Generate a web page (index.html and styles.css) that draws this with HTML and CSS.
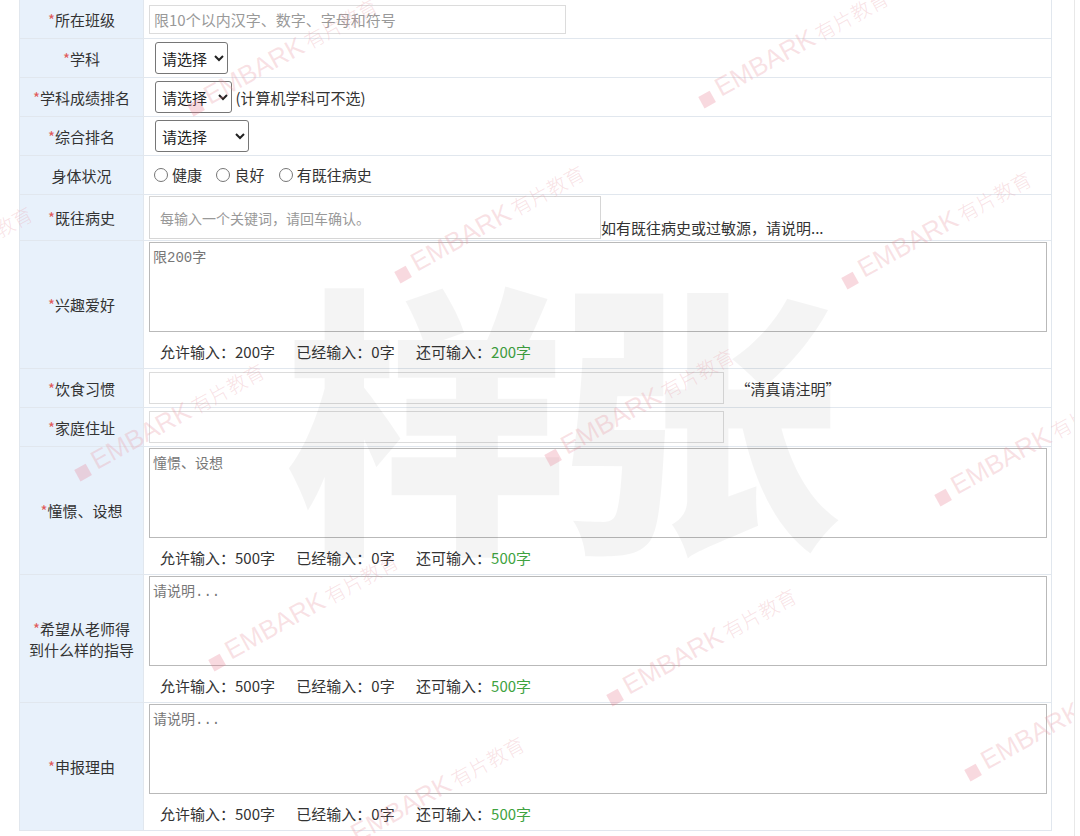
FILE: index.html
```html
<!DOCTYPE html>
<html lang="zh-CN">

<head>
  <meta charset="UTF-8" />
  <title>申报表</title>
  <link rel="stylesheet" href="styles.css">
</head>

<body>
  <div class="page">
    <table class="form-table">
      <tr class="row-s">
        <td class="label"><i>*</i>所在班级</td>
        <td class="field">
          <input type="text" class="txt txt-class" placeholder="限10个以内汉字、数字、字母和符号" />
        </td>
      </tr>
      <tr class="row-s">
        <td class="label"><i>*</i>学科</td>
        <td class="field">
          <select class="sel sel-1"><option>请选择</option></select>
        </td>
      </tr>
      <tr class="row-s">
        <td class="label"><i>*</i>学科成绩排名</td>
        <td class="field">
          <select class="sel sel-2"><option>请选择</option></select>
          <span class="tip">(计算机学科可不选)</span>
        </td>
      </tr>
      <tr class="row-s">
        <td class="label"><i>*</i>综合排名</td>
        <td class="field">
          <select class="sel sel-3"><option>请选择</option></select>
        </td>
      </tr>
      <tr class="row-s">
        <td class="label">身体状况</td>
        <td class="field">
          <label class="radio"><input type="radio" name="health" />健康</label>
          <label class="radio"><input type="radio" name="health" />良好</label>
          <label class="radio"><input type="radio" name="health" />有既往病史</label>
        </td>
      </tr>
      <tr class="row-m">
        <td class="label"><i>*</i>既往病史</td>
        <td class="field field-top">
          <div class="tags">
            <input type="text" class="txt txt-tag" placeholder="每输入一个关键词，请回车确认。" />
            <span class="tip">如有既往病史或过敏源，请说明...</span>
          </div>
        </td>
      </tr>
      <tr class="row-l">
        <td class="label"><i>*</i>兴趣爱好</td>
        <td class="field field-top">
          <textarea class="area" placeholder="限200字"></textarea>
          <div class="count">
            <span>允许输入：200字</span>
            <span>已经输入：0字</span>
            <span>还可输入：<b>200字</b></span>
          </div>
        </td>
      </tr>
      <tr class="row-s">
        <td class="label"><i>*</i>饮食习惯</td>
        <td class="field">
          <input type="text" class="txt txt-wide" />
          <span class="tip tip-quote">“清真请注明”</span>
        </td>
      </tr>
      <tr class="row-s">
        <td class="label"><i>*</i>家庭住址</td>
        <td class="field">
          <input type="text" class="txt txt-wide" />
        </td>
      </tr>
      <tr class="row-l">
        <td class="label"><i>*</i>憧憬、设想</td>
        <td class="field field-top">
          <textarea class="area" placeholder="憧憬、设想"></textarea>
          <div class="count">
            <span>允许输入：500字</span>
            <span>已经输入：0字</span>
            <span>还可输入：<b>500字</b></span>
          </div>
        </td>
      </tr>
      <tr class="row-l">
        <td class="label"><i>*</i>希望从老师得<br>到什么样的指导</td>
        <td class="field field-top">
          <textarea class="area" placeholder="请说明..."></textarea>
          <div class="count">
            <span>允许输入：500字</span>
            <span>已经输入：0字</span>
            <span>还可输入：<b>500字</b></span>
          </div>
        </td>
      </tr>
      <tr class="row-l">
        <td class="label"><i>*</i>申报理由</td>
        <td class="field field-top">
          <textarea class="area" placeholder="请说明..."></textarea>
          <div class="count">
            <span>允许输入：500字</span>
            <span>已经输入：0字</span>
            <span>还可输入：<b>500字</b></span>
          </div>
        </td>
      </tr>
    </table>

    <!-- 水印 -->
    <div class="watermark">
      <div class="big">样张</div>
      <span class="wm" style="left: 195px; top: 92px;">EMBARK<em>有片教育</em></span>
      <span class="wm" style="left: 706px; top: 84px;">EMBARK<em>有片教育</em></span>
      <span class="wm" style="left: 402px; top: 259px;">EMBARK<em>有片教育</em></span>
      <span class="wm" style="left: 849px; top: 265px;">EMBARK<em>有片教育</em></span>
      <span class="wm" style="left: 82px; top: 457px;">EMBARK<em>有片教育</em></span>
      <span class="wm" style="left: 552px; top: 442px;">EMBARK<em>有片教育</em></span>
      <span class="wm" style="left: 942px; top: 482px;">EMBARK<em>有片教育</em></span>
      <span class="wm" style="left: 216px; top: 647px;">EMBARK<em>有片教育</em></span>
      <span class="wm" style="left: 614px; top: 682px;">EMBARK<em>有片教育</em></span>
      <span class="wm" style="left: 972px; top: 757px;">EMBARK<em>有片教育</em></span>
      <span class="wm" style="left: 342px; top: 830px;">EMBARK<em>有片教育</em></span>
      <span class="wm" style="left: -150px; top: 300px;">EMBARK<em>有片教育</em></span>
    </div>
  </div>
</body>

</html>
```

FILE: styles.css
```css
body {
    margin: 0;
    padding: 0;
    background-color: #fff;
    font-family: "Noto Sans CJK SC", "Microsoft YaHei", sans-serif;
    font-size: 15px;
    color: #333;
  }

  .page {
    position: relative;
    width: 1074px;
    height: 836px;
    overflow: hidden;
    border-right: 1px solid #e8e8e8;
  }

  .form-table {
    width: 1033px;
    margin: -1px 0 0 19px;
    border-collapse: collapse;
    table-layout: fixed;
  }

  .form-table td {
    border: 1px solid #e1e7ee;
    padding: 0;
  }

  .row-s {
    height: 39px;
  }

  .row-m {
    height: 46px;
  }

  .row-l {
    height: 128px;
  }

  .label {
    width: 123px;
    background-color: #e8f1fb;
    text-align: center;
    line-height: 21px;
    color: #333;
  }

  .label i {
    font-style: normal;
    color: #e05a5a;
  }

  .field {
    padding-left: 5px !important;
    vertical-align: middle;
  }

  .field-top {
    vertical-align: top;
    padding-top: 0 !important;
  }

  .txt {
    box-sizing: border-box;
    border: 1px solid #dcdcdc;
    outline: none;
    padding: 0 4px;
    font-family: inherit;
    font-size: 15px;
    color: #333;
    vertical-align: middle;
  }

  .txt::placeholder {
    color: #999;
  }

  .txt-class {
    width: 417px;
    height: 29px;
  }

  .txt-wide {
    width: 575px;
    height: 32px;
  }

  .tags {
    display: flex;
    align-items: flex-end;
    padding-top: 1px;
  }

  .txt-tag {
    width: 452px;
    height: 43px;
    padding: 0 10px;
    font-size: 14px;
    border-color: #d6d6d6;
  }

  .tags .tip {
    line-height: 21px;
    padding-bottom: 1px;
  }

  .sel {
    height: 32px;
    margin-left: 6px;
    border: 1px solid #767676;
    border-radius: 3px;
    background-color: #fff;
    font-family: inherit;
    font-size: 15px;
    color: #222;
    padding: 0 2px;
    vertical-align: middle;
  }

  .sel-1 {
    width: 73px;
  }

  .sel-2 {
    width: 77px;
  }

  .sel-3 {
    width: 94px;
  }

  .tip {
    vertical-align: middle;
    font-size: 15px;
    color: #333;
  }

  .tip-quote {
    margin-left: 8px;
  }

  .radio {
    display: inline-flex;
    align-items: center;
    margin-left: 5px;
    margin-right: 6px;
  }

  .radio input {
    width: 14px;
    height: 14px;
    margin: 0 4px 0 0;
  }

  .area {
    display: block;
    box-sizing: border-box;
    width: 898px;
    height: 90px;
    margin-top: 1px;
    border: 1px solid #b9b9b9;
    outline: none;
    resize: none;
    padding: 3px;
    font-family: "Liberation Mono", "Noto Sans CJK SC", monospace;
    font-size: 14px;
  }

  .area::placeholder {
    color: #777;
  }

  .count {
    height: 36px;
    line-height: 40px;
    padding-left: 11px;
    font-size: 15px;
    color: #333;
  }

  .count span {
    margin-right: 18px;
  }

  .count b {
    font-weight: normal;
    color: #3fa33f;
  }

  .watermark {
    position: absolute;
    left: 0;
    top: 0;
    width: 100%;
    height: 100%;
    pointer-events: none;
    overflow: hidden;
  }

  .big {
    position: absolute;
    left: 284px;
    top: 266px;
    font-size: 284px;
    line-height: 1;
    font-weight: 900;
    color: rgba(0, 0, 0, 0.045);
    letter-spacing: -12px;
    white-space: nowrap;
  }

  .wm {
    position: absolute;
    white-space: nowrap;
    transform: rotate(-29deg);
    transform-origin: left bottom;
    font-family: "Liberation Sans", sans-serif;
    font-size: 26px;
    line-height: 26px;
    color: rgba(232, 150, 162, 0.28);
    padding-left: 20px;
  }

  .wm::before {
    content: "";
    position: absolute;
    left: 0;
    bottom: 3px;
    width: 13px;
    height: 13px;
    background-color: rgba(230, 120, 140, 0.28);
  }

  .wm em {
    font-style: normal;
    font-family: "Noto Sans CJK SC", sans-serif;
    font-weight: 300;
    font-size: 20px;
    margin-left: 4px;
  }
```
